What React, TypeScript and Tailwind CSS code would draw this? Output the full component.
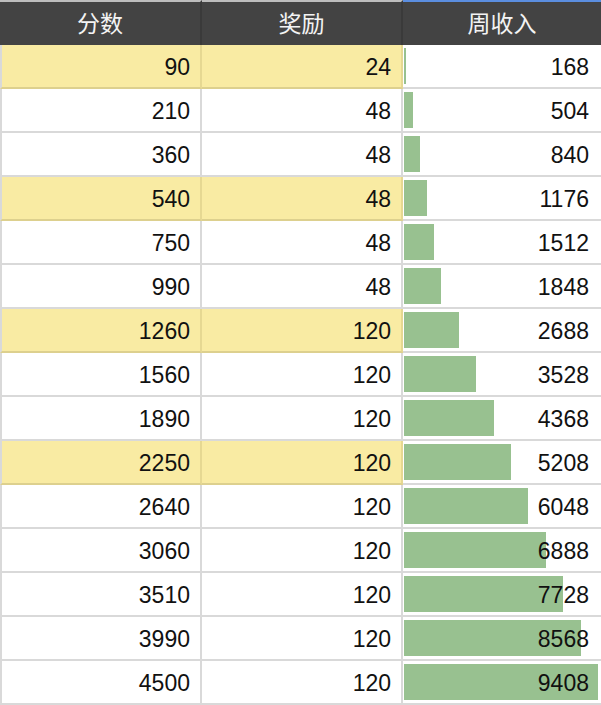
import React from "react"

const rows = [
  { score: 90, reward: 24, weekly: 168, hl: true },
  { score: 210, reward: 48, weekly: 504 },
  { score: 360, reward: 48, weekly: 840 },
  { score: 540, reward: 48, weekly: 1176, hl: true },
  { score: 750, reward: 48, weekly: 1512 },
  { score: 990, reward: 48, weekly: 1848 },
  { score: 1260, reward: 120, weekly: 2688, hl: true },
  { score: 1560, reward: 120, weekly: 3528 },
  { score: 1890, reward: 120, weekly: 4368 },
  { score: 2250, reward: 120, weekly: 5208, hl: true },
  { score: 2640, reward: 120, weekly: 6048 },
  { score: 3060, reward: 120, weekly: 6888 },
  { score: 3510, reward: 120, weekly: 7728 },
  { score: 3990, reward: 120, weekly: 8568 },
  { score: 4500, reward: 120, weekly: 9408 },
]

const MAX = 9408
const BAR_MAX = 195

export default function App() {
  return (
    <div className="w-[601px] h-[705px] bg-white overflow-hidden font-['Liberation_Sans','Noto_Sans_CJK_SC',sans-serif]">
      {/* header */}
      <div className="grid grid-cols-[202px_201px_198px] h-[45px] bg-[#434343] text-[#f3f3f3] text-[23px] font-['Noto_Sans_CJK_SC',sans-serif]">
        <div className="border-t-2 border-t-[#bdbdbd] border-r-2 border-r-[#3a3a3a] flex items-center justify-center pb-[2px]">分数</div>
        <div className="border-t-2 border-t-[#bdbdbd] border-r-2 border-r-[#3a3a3a] flex items-center justify-center pb-[2px]">奖励</div>
        <div className="border-t-2 border-t-[#5b8ee0] flex items-center justify-center pb-[2px]">周收入</div>
      </div>

      {rows.map((r) => {
        const yellow = r.hl
          ? "bg-[#f9eba3] border-b-[#ddd08e] border-r-[#e6d892]"
          : "bg-white border-b-[#d9d9d9] border-r-[#d9d9d9]"
        return (
          <div key={r.score} className="grid grid-cols-[202px_201px_198px] h-[44px] text-[23px] text-[#111]">
            <div className={`border-l-2 border-l-[#d9d9d9] border-r-2 border-b-2 flex items-center justify-end pr-[10px] pt-[3px] ${yellow}`}>
              {r.score}
            </div>
            <div className={`border-r-2 border-b-2 flex items-center justify-end pr-[10px] pt-[3px] ${yellow}`}>
              {r.reward}
            </div>
            <div className="relative border-b-2 border-b-[#d9d9d9] bg-white flex items-center justify-end pr-[12px] pt-[3px]">
              <div
                className="absolute left-[1px] top-[3px] bottom-[3px] bg-[#98c190]"
                style={{ width: Math.max(2, Math.round((r.weekly / MAX) * BAR_MAX) - 1) }}
              />
              <span className="relative">{r.weekly}</span>
            </div>
          </div>
        )
      })}
    </div>
  )
}
